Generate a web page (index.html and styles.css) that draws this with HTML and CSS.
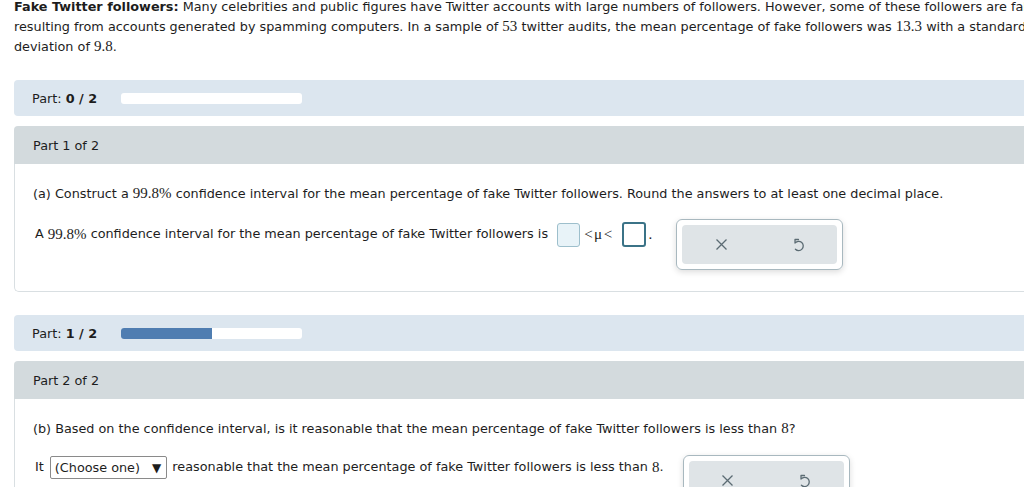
FILE: index.html
```html
<!DOCTYPE html>
<html>
<head>
<meta charset="utf-8">
<link rel="stylesheet" href="styles.css">
</head>
<body>
<div class="page">
  <p class="problem"><b>Fake Twitter followers:</b> Many celebrities and public figures have Twitter accounts with large numbers of followers. However, some of these followers are fake<br>resulting from accounts generated by spamming computers. In a sample of <span class="num">53</span> twitter audits, the mean percentage of fake followers was <span class="num">13.3</span> with a standard<br>deviation of <span class="num">9.8</span>.</p>

  <div class="part-bar">
    <span class="part-label">Part: <b>0 / 2</b></span>
    <span class="progress"><span class="fill" style="width:0%"></span></span>
  </div>

  <div class="part-card">
    <div class="part-head">Part 1 of 2</div>
    <div class="part-body">
      <div class="question">(a) Construct a <span class="num">99.8%</span> confidence interval for the mean percentage of fake Twitter followers. Round the answers to at least one decimal place.</div>
      <div class="answer-row">
        <div class="answer-line">A <span class="num">99.8%</span> confidence interval for the mean percentage of fake Twitter followers is <span class="box box-a"></span><span class="num sym">&lt;μ&lt;</span><span class="box box-b"></span><span class="num dot">.</span></div>
        <div class="tools">
          <div class="tools-inner">
            <span class="tool"><svg width="13" height="13" viewBox="0 0 13 13"><path d="M1.5 1.5 L11.5 11.5 M11.5 1.5 L1.5 11.5" stroke="#5b6b73" stroke-width="1.3" fill="none"/></svg></span>
            <span class="tool"><svg width="13" height="15" viewBox="0 0 13 15"><path d="M6.5 2.5 L3 2.5 L3 6 M3.2 5.9 A4.6 4.6 0 1 1 3.4 12.2" stroke="#5b6b73" stroke-width="1.3" fill="none" stroke-linecap="round" stroke-linejoin="round"/></svg></span>
          </div>
        </div>
      </div>
    </div>
  </div>

  <div class="part-bar">
    <span class="part-label">Part: <b>1 / 2</b></span>
    <span class="progress"><span class="fill" style="width:50%"></span></span>
  </div>

  <div class="part-card">
    <div class="part-head">Part 2 of 2</div>
    <div class="part-body">
      <div class="question">(b) Based on the confidence interval, is it reasonable that the mean percentage of fake Twitter followers is less than <span class="num">8</span>?</div>
      <div class="answer-row row-b">
        <div class="answer-line">It <span class="select">(Choose one) <span class="caret">▼</span></span> reasonable that the mean percentage of fake Twitter followers is less than <span class="num">8</span>.</div>
        <div class="tools tools-b">
          <div class="tools-inner">
            <span class="tool"><svg width="13" height="13" viewBox="0 0 13 13"><path d="M1.5 1.5 L11.5 11.5 M11.5 1.5 L1.5 11.5" stroke="#5b6b73" stroke-width="1.3" fill="none"/></svg></span>
            <span class="tool"><svg width="13" height="15" viewBox="0 0 13 15"><path d="M6.5 2.5 L3 2.5 L3 6 M3.2 5.9 A4.6 4.6 0 1 1 3.4 12.2" stroke="#5b6b73" stroke-width="1.3" fill="none" stroke-linecap="round" stroke-linejoin="round"/></svg></span>
          </div>
        </div>
      </div>
    </div>
  </div>
</div>
</body>
</html>
```

FILE: styles.css
```css
html, body {
  margin: 0;
  padding: 0;
  background: #ffffff;
  overflow: hidden;
}
body {
  font-family: "DejaVu Sans", Verdana, sans-serif;
  font-size: 12.8px;
  color: #1d1d1d;
}
.page {
  width: 1100px;
  padding-left: 14px;
}
.problem {
  margin: -3px 0 0 0;
  line-height: 20px;
  white-space: nowrap;
}
.num {
  font-family: "Liberation Serif", "Times New Roman", serif;
  font-size: 15px;
  line-height: 1;
}
.part-bar {
  margin-top: 23px;
  height: 36px;
  background: #dce6ef;
  border-radius: 4px 0 0 4px;
  display: flex;
  align-items: center;
  padding-left: 18px;
}
.part-label {
  width: 89px;
}
.progress {
  width: 181px;
  height: 11px;
  background: #ffffff;
  border-radius: 3px;
  overflow: hidden;
  display: flex;
}
.fill {
  background: #4f7db1;
  height: 100%;
}
.part-card {
  margin-top: 10px;
}
.part-head {
  height: 38px;
  background: #d3dadd;
  border-radius: 4px 0 0 0;
  display: flex;
  align-items: center;
  padding-left: 19px;
}
.part-body {
  border-left: 1px solid #d9dfe2;
  border-bottom: 1px solid #d9dfe2;
  border-radius: 0 0 0 5px;
  padding: 20px 0 21px 18px;
  margin-bottom: 23px;
}
.question {
  line-height: 20px;
}
.answer-row {
  margin-top: 15px;
  display: flex;
  align-items: flex-start;
}
.answer-line {
  margin-top: 2px;
  line-height: 26px;
  height: 26px;
  padding-left: 2px;
  white-space: nowrap;
}
.answer-line > * {
  vertical-align: middle;
}
.box {
  display: inline-block;
  width: 21px;
  height: 22px;
  border-radius: 3px;
  box-sizing: content-box;
}
.box-a {
  margin-left: 5px;
  background: #e8f3f8;
  border: 1px solid #9dbfcc;
}
.box-b {
  background: #ffffff;
  border: 2px solid #3b7387;
  width: 20px;
  height: 21px;
}
.sym {
  font-size: 15px;
  letter-spacing: 1.5px;
  margin: 0 8px 0 4px;
}
.dot {
  margin-left: 3px;
}
.tools {
  margin-left: 24px;
  width: 155px;
  height: 39px;
  padding: 5px;
  border: 1px solid #a8b8bf;
  border-radius: 6px;
  box-shadow: 0 2px 6px rgba(0, 0, 0, 0.14);
}
.tools-inner {
  height: 100%;
  background: #dfe4e7;
  border-radius: 4px;
  display: flex;
}
.tool {
  flex: 1;
  display: flex;
  align-items: center;
  justify-content: center;
}
.row-b {
  margin-top: 16px;
}
.row-b .answer-line {
  margin-top: 0;
  height: 23px;
  line-height: 23px;
}
.select {
  display: inline-block;
  height: 21px;
  line-height: 21px;
  padding: 0 5px 0 4px;
  border: 1px solid #8a8a8a;
  border-radius: 2px;
  margin: 0 1px 0 2px;
}
.caret {
  font-size: 12px;
  margin-left: 8px;
}
.tools-b {
  margin-left: 19px;
}
```
